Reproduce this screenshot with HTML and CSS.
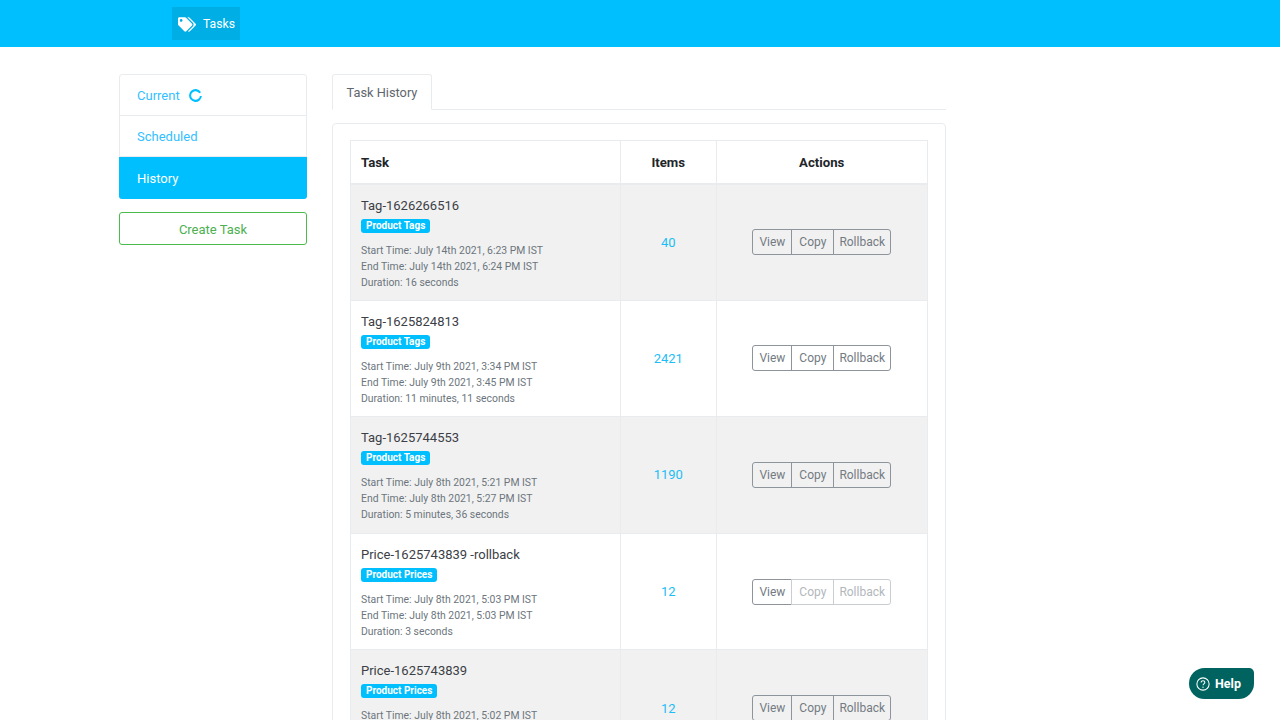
FILE: index.html
```html
<!DOCTYPE html>
<html lang="en">
<head>
    <meta charset="UTF-8">
    <meta name="viewport" content="width=device-width, initial-scale=1.0">
    <title>Tasks</title>
    <link rel="stylesheet" href="styles.css">
</head>
<body>
    <nav class="topbar">
        <a class="topbar-item" href="#">
            <svg class="tags-icon" viewBox="0 0 640 512" aria-hidden="true"><path fill="currentColor" d="M497.941 225.941L286.059 14.059A48 48 0 0 0 252.118 0H48C21.49 0 0 21.49 0 48v204.118a48 48 0 0 0 14.059 33.941l211.882 211.882c18.744 18.745 49.136 18.746 67.882 0l204.118-204.118c18.745-18.745 18.745-49.137 0-67.882zM112 160c-26.51 0-48-21.49-48-48s21.49-48 48-48 48 21.49 48 48-21.49 48-48 48zm513.941 133.823L421.823 497.941c-18.745 18.745-49.137 18.745-67.882 0l-.36-.36L527.64 323.522c16.999-16.999 26.36-39.6 26.36-63.64s-9.362-46.641-26.36-63.64L331.397 0h48.721a48 48 0 0 1 33.941 14.059l211.882 211.882c18.745 18.745 18.745 49.137 0 67.882z"/></svg>
            Tasks
        </a>
    </nav>

    <div class="layout">
        <aside class="sidebar">
            <div class="side-menu">
                <a class="side-link" href="#">Current
                    <svg class="spinner" viewBox="0 0 14 14" aria-hidden="true"><circle cx="7" cy="7" r="5.8" fill="none" stroke="currentColor" stroke-width="2.2" stroke-dasharray="32 4.5" transform="rotate(5 7 7)"/></svg>
                </a>
                <a class="side-link" href="#">Scheduled</a>
                <a class="side-link active" href="#">History</a>
            </div>
            <a class="create-btn" href="#">Create Task</a>
        </aside>

        <main class="content">
            <div class="tabs">
                <a class="tab" href="#">Task History</a>
            </div>

            <div class="card">
                <table class="task-table">
                    <thead>
                        <tr>
                            <th class="col-task">Task</th>
                            <th class="col-items">Items</th>
                            <th class="col-actions">Actions</th>
                        </tr>
                    </thead>
                    <tbody>
                        <tr>
                            <td>
                                <div class="task-name">Tag-1626266516</div>
                                <span class="badge">Product Tags</span>
                                <div class="task-meta">Start Time: July 14th 2021, 6:23 PM IST<br>End Time: July 14th 2021, 6:24 PM IST<br>Duration: 16 seconds</div>
                            </td>
                            <td class="items"><a href="#">40</a></td>
                            <td class="actions">
                                <div class="btn-group"><button>View</button><button>Copy</button><button>Rollback</button></div>
                            </td>
                        </tr>
                        <tr>
                            <td>
                                <div class="task-name">Tag-1625824813</div>
                                <span class="badge">Product Tags</span>
                                <div class="task-meta">Start Time: July 9th 2021, 3:34 PM IST<br>End Time: July 9th 2021, 3:45 PM IST<br>Duration: 11 minutes, 11 seconds</div>
                            </td>
                            <td class="items"><a href="#">2421</a></td>
                            <td class="actions">
                                <div class="btn-group"><button>View</button><button>Copy</button><button>Rollback</button></div>
                            </td>
                        </tr>
                        <tr>
                            <td>
                                <div class="task-name">Tag-1625744553</div>
                                <span class="badge">Product Tags</span>
                                <div class="task-meta">Start Time: July 8th 2021, 5:21 PM IST<br>End Time: July 8th 2021, 5:27 PM IST<br>Duration: 5 minutes, 36 seconds</div>
                            </td>
                            <td class="items"><a href="#">1190</a></td>
                            <td class="actions">
                                <div class="btn-group"><button>View</button><button>Copy</button><button>Rollback</button></div>
                            </td>
                        </tr>
                        <tr>
                            <td>
                                <div class="task-name">Price-1625743839 -rollback</div>
                                <span class="badge">Product Prices</span>
                                <div class="task-meta">Start Time: July 8th 2021, 5:03 PM IST<br>End Time: July 8th 2021, 5:03 PM IST<br>Duration: 3 seconds</div>
                            </td>
                            <td class="items"><a href="#">12</a></td>
                            <td class="actions">
                                <div class="btn-group"><button>View</button><button disabled>Copy</button><button disabled>Rollback</button></div>
                            </td>
                        </tr>
                        <tr>
                            <td>
                                <div class="task-name">Price-1625743839</div>
                                <span class="badge">Product Prices</span>
                                <div class="task-meta">Start Time: July 8th 2021, 5:02 PM IST</div>
                            </td>
                            <td class="items"><a href="#">12</a></td>
                            <td class="actions">
                                <div class="btn-group"><button>View</button><button>Copy</button><button>Rollback</button></div>
                            </td>
                        </tr>
                    </tbody>
                </table>
            </div>
        </main>
    </div>

    <a class="help-btn" href="#">
        <svg class="help-icon" viewBox="0 0 16 16" aria-hidden="true"><circle cx="8" cy="8" r="7" fill="none" stroke="currentColor" stroke-width="1.2"/><path d="M5.9 6.2c0-1.2.9-2 2.1-2s2.1.8 2.1 1.9c0 1.7-2.1 1.7-2.1 3.3" fill="none" stroke="currentColor" stroke-width="1.2"/><circle cx="8" cy="11.6" r=".8" fill="currentColor"/></svg>
        Help
    </a>
</body>
</html>
```

FILE: styles.css
```css
* {
    box-sizing: border-box;
}

html, body {
    height: 100%;
    overflow: hidden;
}

body {
    margin: 0;
    background-color: #ffffff;
    color: #212529;
    font-family: 'Roboto', 'Noto Sans', sans-serif;
    font-size: 13px;
}

a {
    text-decoration: none;
}

.topbar {
    height: 47px;
    background-color: #00bfff;
    padding: 7px 0 0 172px;
}

.topbar-item {
    display: inline-flex;
    align-items: center;
    gap: 7px;
    width: 68px;
    height: 33px;
    padding: 1px 0 0 6px;
    background-color: #00aee6;
    color: #ffffff;
    font-size: 12.2px;
}

.tags-icon {
    width: 18px;
    height: 15px;
}

.layout {
    display: flex;
    align-items: flex-start;
    gap: 25px;
    padding: 27px 0 0 119px;
}

.sidebar {
    width: 188px;
    display: flex;
    flex-direction: column;
    gap: 13px;
}

.side-menu {
    display: flex;
    flex-direction: column;
    height: 125px;
    border: 1px solid #e9ecef;
    border-radius: 3px;
}

.side-link {
    display: flex;
    align-items: center;
    gap: 9px;
    height: 41px;
    padding: 1px 17px 0;
    color: #33bfff;
    font-size: 13px;
    border-bottom: 1px solid #e9ecef;
}

.side-link:last-child {
    border-bottom: none;
}

.side-link.active {
    height: 42px;
    margin: 0 -1px -1px;
    padding: 0 18px;
    background-color: #00bfff;
    border-radius: 0 0 3px 3px;
    color: #ffffff;
}

.spinner {
    width: 13px;
    height: 13px;
    color: #00bfff;
}

.create-btn {
    display: flex;
    align-items: center;
    justify-content: center;
    height: 33px;
    padding-top: 1px;
    border: 1px solid #4cbb4c;
    border-radius: 3px;
    color: #4caf50;
    font-size: 13px;
}

.content {
    width: 614px;
}

.tabs {
    height: 36px;
    border-bottom: 1px solid #e9ecef;
    margin-bottom: 13px;
}

.tab {
    display: inline-flex;
    align-items: center;
    justify-content: center;
    width: 100px;
    height: 36px;
    background-color: #ffffff;
    border: 1px solid #e9ecef;
    border-bottom-color: #ffffff;
    border-radius: 3px 3px 0 0;
    color: #5f666d;
    font-size: 12.8px;
}

.card {
    border: 1px solid #e9ecef;
    border-radius: 4px;
    padding: 16px 17px;
}

.task-table {
    width: 578px;
    table-layout: fixed;
    border-collapse: collapse;
}

.task-table th,
.task-table td {
    border: 1px solid #e9ecef;
    padding: 10px;
}

.task-table td {
    vertical-align: top;
    padding-top: 11px;
    padding-bottom: 8px;
}

.task-table th {
    height: 43px;
    padding-top: 11px;
    padding-bottom: 9px;
    border-bottom-width: 2px;
    font-size: 13.2px;
    font-weight: 700;
    color: #212529;
    text-align: center;
}

.task-table th.col-task {
    width: 270px;
    text-align: left;
}

.task-table th.col-items {
    width: 95.5px;
}

.task-table tbody tr {
    height: 116.6px;
}

.task-table tbody tr:nth-child(odd) {
    background-color: #f1f1f1;
}

.task-name {
    font-size: 13px;
    line-height: 20px;
    color: #3b4046;
}

.badge {
    display: inline-block;
    margin-top: 3px;
    padding: 0 5px;
    height: 14px;
    line-height: 14px;
    background-color: #00bfff;
    border-radius: 3px;
    color: #ffffff;
    font-size: 10px;
    font-weight: 700;
    vertical-align: top;
}

.task-meta {
    margin-top: 10px;
    font-size: 10.4px;
    line-height: 16px;
    color: #6c757d;
}

.task-table td.items {
    vertical-align: middle;
    padding-top: 10px;
    padding-bottom: 10px;
    text-align: center;
    font-size: 13px;
}

.items a {
    color: #1dbdf5;
}

.task-table td.actions {
    vertical-align: middle;
    padding-top: 10px;
    padding-bottom: 10px;
    text-align: center;
}

.btn-group {
    display: inline-flex;
}

.btn-group button {
    height: 26px;
    margin: 0 0 0 -1px;
    padding: 0 6px;
    background: transparent;
    border: 1px solid #8d949b;
    color: #737b83;
    font-family: inherit;
    font-size: 12px;
}

.btn-group button:first-child {
    margin-left: 0;
    border-radius: 3px 0 0 3px;
}

.btn-group button:nth-child(2) {
    padding: 0 7px;
}

.btn-group button:last-child {
    padding: 0 5px;
    border-radius: 0 3px 3px 0;
}

.btn-group button:disabled {
    border-color: #c9ced3;
    color: #b2b7bc;
}

.help-btn {
    position: fixed;
    left: 1189px;
    top: 668px;
    display: flex;
    align-items: center;
    gap: 5px;
    width: 65px;
    height: 31px;
    padding-left: 7px;
    background-color: #00635f;
    border-radius: 16px 5px 16px 16px;
    color: #ffffff;
    font-size: 12.5px;
    font-weight: 700;
}

.help-icon {
    width: 14px;
    height: 14px;
}
```
